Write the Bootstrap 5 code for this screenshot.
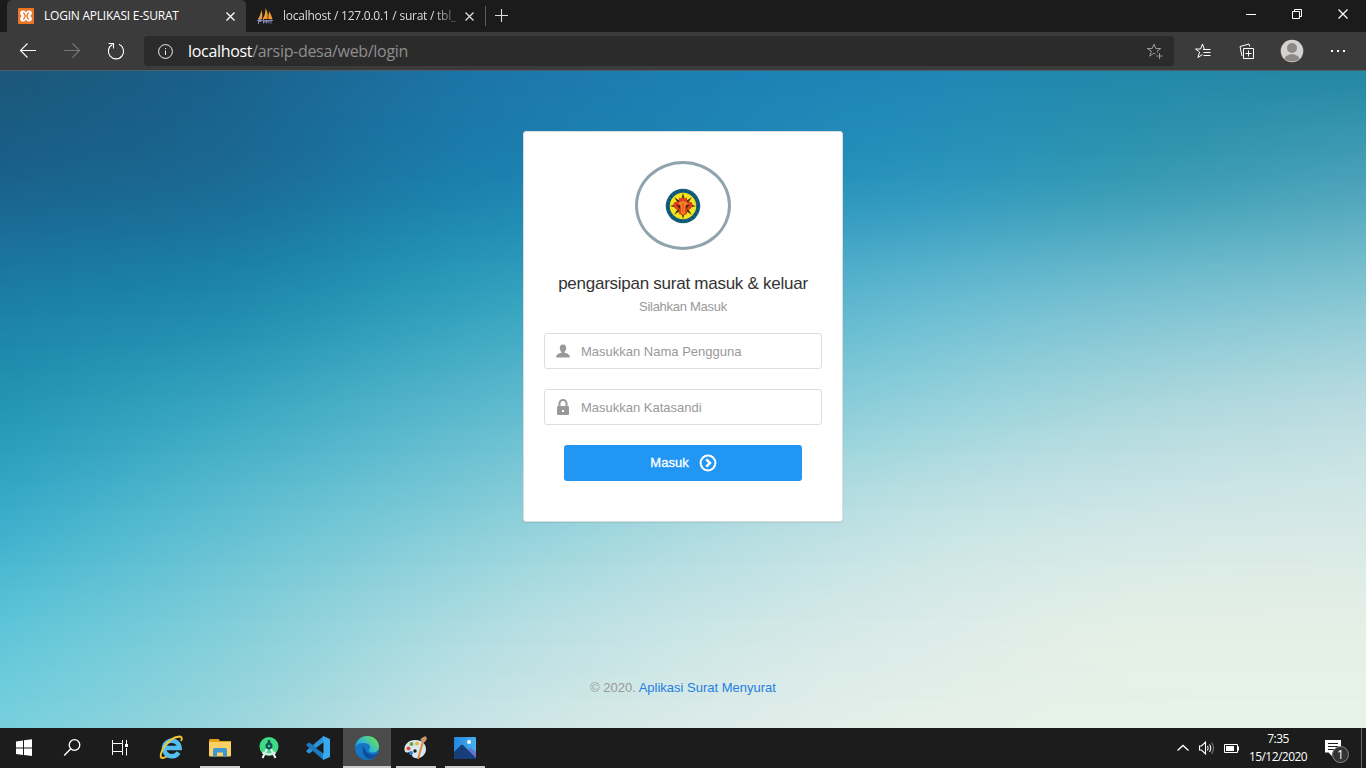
<!DOCTYPE html>
<html lang="id">
<head>
<meta charset="utf-8">
<meta name="viewport" content="width=device-width, initial-scale=1">
<title>LOGIN APLIKASI E-SURAT</title>
<link href="https://cdn.jsdelivr.net/npm/bootstrap@5.3.0/dist/css/bootstrap.min.css" rel="stylesheet">
<style>
body{font-family:"Liberation Sans",Arial,sans-serif;font-size:13px;line-height:20px;height:768px;overflow:hidden;color:#333}
svg{display:block;flex:none}
.ui-font{font-family:"Open Sans","Noto Sans",sans-serif}
/* browser window */
.tab-strip{height:32px;background:#1b1b1b;color:#fff;font-size:12px}
.tab-item{height:32px}
.tab-item.current{width:239px;margin-left:7px;padding-left:11px;background:#3b3b3b;border-radius:5px 5px 0 0}
.tab-item.other{width:239px;padding-left:11px}
.tab-text{white-space:nowrap;line-height:16px;width:181px;margin-left:10px;letter-spacing:-.23px}
.tab-item.other .tab-text{color:#ddd;letter-spacing:-.24px;-webkit-mask-image:linear-gradient(90deg,#000 150px,transparent 180px);mask-image:linear-gradient(90deg,#000 150px,transparent 180px)}
.tool-bar{height:39px;background:#3b3b3b;border-bottom:1px solid #4f6069}
.address{width:1030px;height:30px;background:#2b2b2b;border-radius:4px;font-size:16px;color:#8e8e8e}
.address-text{margin-left:15px;white-space:nowrap;letter-spacing:-.31px}
/* page */
.page-area{height:657px;isolation:isolate}
.sky{position:absolute;inset:0;z-index:-1}
.sky div{position:absolute;inset:0}
.login-card{width:320px;height:391px;margin-top:60px;border:1px solid #ddd;border-radius:3px;box-shadow:0 1px 1px rgba(0,0,0,.08);padding:29px 20px 0}
.emblem{width:96px;height:89px;border:3px solid #90a4ae;border-radius:50%}
.form-title{font-size:17px;line-height:24px;margin-top:22px;color:#333;white-space:nowrap;letter-spacing:-.26px}
.form-note{letter-spacing:-.27px;margin-top:1px}
.soft{color:#999}
.field{height:36px;border:1px solid #ddd;border-radius:3px;padding-left:11px}
.field input{border:0;outline:0;padding:2px 0 0;width:220px;margin-left:11px;color:#333;background:none}
.field input::placeholder{color:#999;opacity:1}
.enter{width:238px;height:36px;background:#2196f3;border:0;border-radius:3px;color:#fff;font-size:13px;font-weight:500;-webkit-text-stroke:.3px #fff;padding:0 0 0 1px}
.page-foot{margin-top:156px}
.page-foot a{color:#1e7fe0;text-decoration:none}
/* taskbar */
.task-bar{height:40px;background:#1c1c1c;color:#fff}
.app{width:40px;height:40px;border-bottom:2px solid transparent}
.app.running{border-color:#ccc}
.app.focused{width:48px;background:#4b4b4b}
.clock{font-size:12px;line-height:18px;width:60px;text-align:center;white-space:nowrap;letter-spacing:-.55px}
.note-count{position:absolute;left:24px;top:18px;width:17px;height:17px;border:1px solid #888;border-radius:50%;background:#333;font-size:12px;line-height:15px;text-align:center}
</style>
</head>
<body>
<header class="ui-font">
 <div class="tab-strip d-flex">
  <div class="tab-item current d-flex align-items-center">
   <svg width="16" height="16" viewBox="0 0 16 16"><rect width="16" height="16" rx="1" fill="#ec7424"/><path d="M4.500 2.500h1.800L8 4.200l1.700-1.700h1.800c3 0 3 4 .8 5.500 2.200 1.500 2.200 5.500-.8 5.500H9.700L8 11.800l-1.700 1.700H4.500c-3 0-3-4-.8-5.500-2.200-1.500-2.200-5.500.8-5.500z" fill="#fff"/><path d="M5 5.200h1L7.300 8 6 10.800H5M11 5.200h-1L8.700 8l1.300 2.800h1" fill="none" stroke="#ec7424" stroke-width="1.300"/></svg>
   <span class="tab-text">LOGIN APLIKASI E-SURAT</span>
   <svg width="10" height="10" viewBox="0 0 10 10"><path d="M1.500 1.500l8 8M9.500 1.500l-8 8" stroke="#fff" stroke-width="1.300"/></svg>
  </div>
  <div class="tab-item other d-flex align-items-center">
   <svg width="16" height="16" viewBox="0 0 16 16"><path d="M1 11C3 8 4 5 4.500 2 5.500 5 5.500 8 5 11zM5.500 11c2.500-3 3-7 3-11 2.500 4 2.500 8 2 11zM11 11c1-2 1-6 .8-8 2 3 3 5 3.700 8z" fill="#f79421"/><path d="M3 10l1.500-5M8 10l1-6M12 10V6" stroke="#c9b27a" stroke-width=".8"/><path d="M1.500 16v-4.500H4v2H1.500M6.500 11v4.500M6.500 13H8v2M9.500 15.500v-3.500l1.200 2 1.200-2v3.500M14 11v4.500M0 12.500h16" stroke="#8587ae" stroke-width="1" fill="none"/></svg>
   <span class="tab-text">localhost / 127.0.0.1 / surat / tbl_</span>
   <svg width="10" height="10" viewBox="0 0 10 10"><path d="M1.500 1.500l8 8M9.500 1.500l-8 8" stroke="#ddd" stroke-width="1.300"/></svg>
  </div>
  <svg width="24" height="32" viewBox="0 0 24 32"><path d="M.5 6v20" stroke="#5c5c5c"/><path d="M10 15.500h13M16.500 9v13" stroke="#ddd" stroke-width="1.100"/></svg>
  <svg class="ms-auto" width="120" height="32" viewBox="0 0 120 32" fill="none" stroke="#fff"><path d="M0 14.500h10"/><path d="M46.500 11.500h7v7h-7zM48.500 11.500v-2h7v7h-2"/><path d="M92.500 9.500l9 9M101.500 9.500l-9 9" stroke-width="1.200"/></svg>
 </div>
 <div class="tool-bar d-flex align-items-center">
  <svg width="144" height="38" viewBox="0 0 144 38" fill="none" stroke="#fff" stroke-width="1.100"><path d="M36 18.500H20.500M27.500 11.500l-7 7 7 7"/><path d="M64 18.500h15.500M72.500 11.500l7 7-7 7" stroke="#777"/><path d="M112.500 12.500a7.600 7.600 0 1 0 6.500-.2M108.500 11.500h5v5"/></svg>
  <div class="address d-flex align-items-center">
   <svg style="margin-left:14px" width="15" height="15" viewBox="0 0 15 15" fill="none" stroke="#eee"><circle cx="7.500" cy="7.500" r="6.900"/><path d="M7.500 6.500V11M7.500 4v1.200"/></svg>
   <span class="address-text"><span class="text-white">localhost</span>/arsip-desa/web/login</span>
   <svg class="ms-auto" style="margin-right:10px" width="18" height="18" viewBox="0 0 18 18" fill="none" stroke="#999"><path d="M9.500 12.200L8 11l-4.300 3.200L5.300 9 1.200 6.500h5L8 2.200l1.800 4.300h5L11.200 9l.4 1.500M13.500 11v6M10.500 14h6"/></svg>
  </div>
  <svg class="ms-auto" width="172" height="38" viewBox="0 0 172 38" fill="none" stroke="#fff"><path d="M8.500 22.500l-4.600 3 1.700-5.500L1.500 17h5l2-5 1.700 5M9 17.500h7.500M9.500 20.500h7M9.500 23.500h7"/><path d="M49.500 16.500h10v10h-10zM54.500 18.500v6M51.500 21.500h6"/><path d="M48 24l-2-9.500 9-2.500.7 2.500"/><g stroke="none"><circle cx="98" cy="19" r="11.300" fill="#d5d3d1"/><circle cx="98" cy="16" r="5" fill="#8b8885"/><path d="M90.500 26.800C92 20.800 104 20.800 105.500 26.800 102 30.500 94 30.500 90.500 26.800z" fill="#8b8885"/><path d="M137 18h2v2h-2zM143 18h2v2h-2zM149 18h2v2h-2z" fill="#fff"/></g></svg>
 </div>
</header>

<main class="page-area position-relative d-flex flex-column align-items-center overflow-hidden">
 <div class="sky" id="sky"></div>
 <form class="login-card bg-white text-center" onsubmit="return false">
  <div class="emblem mx-auto d-flex align-items-center justify-content-center">
   <svg width="36" height="36" viewBox="-18 -18 36 36"><circle r="17.300" fill="#17617f"/><circle r="15" fill="none" stroke="#0b4868" stroke-width="1.500" stroke-dasharray="2 2"/><circle r="13.200" fill="#f5e51c"/><g fill="#493712"><path d="M-2-6L0-13l2 7zM-2 6L0 13 2 6zM-6-2L-13 0l7 2zM6-2L13 0 6 2z"/><path transform="rotate(45)" d="M-1.700-5L0-12.500l1.700 7.500zM-1.700 5L0 12.500 1.700 5zM-5-1.700L-12.500 0l7.500 1.700zM5-1.700L12.500 0 5 1.700z"/></g><path d="M-4-8.500l2.500 1L0-9l1.500 1.500 2.500-1V-4h4.500L10-1 7 3.500H4V8L0 9.500-4 8V3.500h-3L-10-1l1.500-3H-4z" fill="#df3f20"/><path d="M-5-3L0-5l5 2-3 3v7L0 9l-2-2V0z" fill="#f28525"/><path d="M-7-1.500l4 1V3zM7-1.500l-4 1V3z" fill="#56200d"/><path d="M0-3v9" stroke="#e04422"/></svg>
  </div>
  <div class="form-title">pengarsipan surat masuk &amp; keluar</div>
  <div class="soft form-note">Silahkan Masuk</div>
  <label class="field d-flex align-items-center" style="margin-top:16px">
   <svg width="14" height="14" viewBox="0 0 14 14" fill="#999"><path d="M7 .5c2.200 0 3.200 1.500 3.200 3.500 0 1.700-.8 3.300-1.700 4v.8c2.700.3 5.300 1.800 5.500 4.700H0c.2-2.900 2.800-4.400 5.500-4.700V8c-.9-.7-1.700-2.300-1.700-4C3.800 2 4.800.5 7 .5z"/></svg>
   <input type="text" placeholder="Masukkan Nama Pengguna">
  </label>
  <label class="field d-flex align-items-center" style="margin-top:20px">
   <svg width="14" height="16" viewBox="0 0 14 16"><path d="M3.500 8V4.500a3.500 3.500 0 0 1 7 0V8" fill="none" stroke="#999" stroke-width="2"/><rect x="1" y="7" width="12" height="9" rx="1" fill="#999"/><path d="M6 11h2v2H6z" fill="#fff"/></svg>
   <input type="password" placeholder="Masukkan Katasandi">
  </label>
  <button class="enter btn mx-auto d-flex align-items-center justify-content-center" style="margin-top:20px"><span>Masuk</span>
   <svg style="margin-left:10px" width="18" height="18" viewBox="0 0 18 18" fill="none" stroke="#fff" stroke-width="2"><circle cx="9" cy="9" r="7.400"/><path d="M7.300 5.300L11 9l-3.700 3.700" stroke-width="2.500"/></svg>
  </button>
 </form>
 <div class="page-foot soft">© 2020. <a href="#">Aplikasi Surat Menyurat</a></div>
</main>

<footer class="task-bar d-flex ui-font">
 <svg width="151" height="40" viewBox="0 0 151 40" fill="none" stroke="#fff"><path d="M16 13.500l7-1v7h-7zM24 12.300l8-1v8.200h-8zM16 20.500h7V27l-7-1zM24 20.500h8V28l-8-1z" fill="#fff" stroke="none"/><circle cx="74.500" cy="17" r="5.300" stroke-width="1.300"/><path d="M70.800 20.800l-6.600 6.600" stroke-width="1.400"/><path d="M112.500 12v3.500h10V12M112.500 27v-3.500h10V27M112.500 15.500v8M122.500 15.500v8M126.500 12v4M126.500 20v7.500"/><path d="M125 16h3v3h-3z" fill="#fff" stroke="none"/></svg>
 <div class="app d-flex justify-content-center"><svg width="26" height="40" viewBox="0 0 26 40"><path d="M20.500 24.500a7.800 7.800 0 1 1 1.100-4.500H7" fill="none" stroke="#53bff0" stroke-width="4.500"/><path d="M4 30C-1 28 9 9 22 8.500c2.500.5 2 3 1 4.500M4 30c1.500.3 3-.5 4.500-1.500" fill="none" stroke="#f4c631" stroke-width="1.900"/></svg></div>
 <div style="width:9px"></div>
 <div class="app running d-flex justify-content-center"><svg width="22" height="40" viewBox="0 0 22 40"><path d="M0 12.500q0-1.500 1.500-1.500h8l1.500 2h11v14.500H0z" fill="#e4a317"/><path d="M0 14h22v13.500q0 1-1 1H1q-1 0-1-1z" fill="#fad165"/><path d="M4 28.500V22q0-2 2-2h10q2 0 2 2v6.500h-4V24.500H8v4z" fill="#3e96d3"/></svg></div>
 <div style="width:9px"></div>
 <div class="app d-flex justify-content-center"><svg width="20" height="40" viewBox="0 0 20 40"><circle cx="10" cy="18.500" r="9.500" fill="#3ddc84"/><path d="M10 12v3" stroke="#174e55" stroke-width="2.500"/><circle cx="10" cy="18" r="3.500" fill="#174e55"/><circle cx="10" cy="18" r="1.200" fill="#3ddc84"/><path d="M8 21L3.500 30M12 21l4.500 9" stroke="#f1f4f5" stroke-width="2"/><path d="M3.500 24.500q6.500 3.500 13 0" fill="none" stroke="#dae8e8" stroke-width="2"/></svg></div>
 <div style="width:9px"></div>
 <div class="app d-flex justify-content-center"><svg width="24" height="40" viewBox="0 0 24 40"><path d="M17.500 14.500L3.500 25.500 .5 24v-1.500L17.500 8z" fill="#2a93d8"/><path d="M17.500 25.500L3.500 14.500 .5 16v1.500l17 14.500z" fill="#1c79bd"/><path d="M17 8l7 3v18l-7 3z" fill="#39a9ef"/><path d="M17.500 14.500v11L10 20z" fill="#1c1c1c"/></svg></div>
 <div style="width:5px"></div>
 <div class="app focused running d-flex justify-content-center"><svg width="24" height="40" viewBox="0 0 24 40"><defs><linearGradient id="eg" x1="0" y1="1" x2="1" y2=".3"><stop offset="0" stop-color="#1677cc"/><stop offset=".5" stop-color="#2fb7d3"/><stop offset="1" stop-color="#6be056"/></linearGradient></defs><circle cx="12" cy="20" r="12" fill="#1475c5"/><path d="M0 19C1 12 6 8 12 8c7 0 12 5 12 10.500 0 4-3 6-6.500 6-3 0-4.500-1.200-3.500-2.500 3-4-.5-7-5-7-4 0-7 1.500-9 4z" fill="url(#eg)"/><path d="M9 18c-3 4-.5 11.500 5.500 13 4-.7 7-3 8.500-6-5 3.500-13 1.500-14-7z" fill="#0e4d9c"/></svg></div>
 <div style="width:5px"></div>
 <div class="app running d-flex justify-content-center"><svg width="26" height="40" viewBox="0 0 26 40"><path d="M12.500 12C5 12 1 17 1.500 22c.5 3 3 3 4.500 2 3 0 2 5 6 6 6 1 11-3 11-9 0-5-4-9-10.500-9z" fill="#d8e8f3"/><circle cx="5.500" cy="20.500" r="2" fill="#e04a35"/><circle cx="8.500" cy="16" r="2" fill="#66a83a"/><circle cx="14" cy="15.500" r="2" fill="#edb830"/><circle cx="8" cy="25" r="2" fill="#3c7ed0"/><circle cx="12" cy="23" r="1.700" fill="#1c1c1c"/><path d="M14 31l4.500-16 2 .5L16 31z" fill="#e08b38"/><path d="M19 15.500l-1.500-4c1-2 3-2 4.500-3.500l2 2c-.5 1-.5 3-3 4.500l-.5 1.500z" fill="#c8976a"/></svg></div>
 <div style="width:9px"></div>
 <div class="app running d-flex justify-content-center"><svg width="22" height="40" viewBox="0 0 22 40"><defs><linearGradient id="pg" x1="0" x2="1"><stop offset="0" stop-color="#2487df"/><stop offset="1" stop-color="#49b0f0"/></linearGradient></defs><rect y="9" width="22" height="22" rx="1" fill="url(#pg)"/><path d="M11 25l5-5q.7-.5 1.400 0l4.600 4v7H12z" fill="#6675cc"/><path d="M0 24l7-7q1-1 2 0l13 13v1H0z" fill="#173e7b"/><circle cx="15" cy="14" r="2" fill="#fff"/></svg></div>
 <svg class="ms-auto" width="64" height="40" viewBox="0 0 64 40" fill="none" stroke="#fff"><path d="M.5 22.500l5.500-5 5.500 5" stroke-width="1.300"/><path d="M22.500 18h2l4-4v12l-4-4h-2zM30.500 18q1.500 2 0 4.500M32.500 16.500q2.500 3.500 0 7.500" stroke-width="1.100"/><path d="M34.700 14.500q3.500 5.500 0 11.500" stroke="#888"/><path d="M47.500 16.500h13v8h-13zM61.500 18.500v4"/><path d="M49 18h8v5h-8z" fill="#fff" stroke="none"/></svg>
 <div class="clock" style="margin-left:7px;margin-top:2px"><div>7:35</div><div>15/12/2020</div></div>
 <div class="position-relative" style="width:53px;padding-left:16px;padding-top:11px"><svg width="18" height="19" viewBox="0 0 18 19"><path d="M1 1h16v12.500H8V17l-3.500-3.500H1z" fill="#fff"/><path d="M4 4.500h10M4 7.500h10M4 10.500h6" stroke="#1c1c1c"/></svg><span class="note-count">1</span></div>
 <div style="width:5px;border-left:1px solid #666"></div>
</footer>
<script src="https://cdn.jsdelivr.net/npm/bootstrap@5.3.0/dist/js/bootstrap.bundle.min.js"></script>
<script>
// Colour mesh of the page background, smoothed to a finer grid;
// each row then fades into the one below it.
const mesh = [
 ['#1b5778','#1a618c','#1d73a5','#1d7eb3','#1e86b5','#2387a9','#2488a4'],
 ['#1a628c','#1b6b95','#1c7fac','#228ab5','#2c95bd','#389bb4','#4ba2b9'],
 ['#1c7ca3','#1e86aa','#2d9cba','#45a9c5','#60b7cf','#74bed0','#82c4d1'],
 ['#2294b2','#37a4bf','#56b5cb','#72c2d2','#90cfdb','#a8d6dc','#b8dbe0'],
 ['#38abc9','#5cbcd0','#7fcad7','#a3d7de','#bee1e3','#cde5e6','#d3e7e6'],
 ['#5bc3d7','#80cdd9','#a9dae0','#c6e4e5','#d8eae8','#e2efe6','#e3efe6'],
 ['#78d0dd','#9bd6dd','#c6e3e5','#dbebe8','#e5f0e9','#e8f2e8','#e8f3e8']
].map(r => r.map(h => [1, 3, 5].map(k => parseInt(h.substr(k, 2), 16))));
// Catmull-Rom subdivision of a list of number vectors
function refine(list, steps) {
  const out = [], last = list.length - 1;
  for (let i = 0; i < last; i++) {
    const b = list[i], c = list[i + 1];
    const a = list[i - 1] || b.map((v, k) => 2 * v - c[k]);
    const d = list[i + 2] || c.map((v, k) => 2 * v - b[k]);
    for (let s = 0; s < steps; s++) {
      const t = s / steps;
      out.push(b.map((v, k) => .5 * (2 * v + (c[k] - a[k]) * t + (2 * a[k] - 5 * v + 4 * c[k] - d[k]) * t * t + (3 * v - a[k] - 3 * c[k] + d[k]) * t * t * t)));
    }
  }
  out.push(list[last]);
  return out;
}
const rows = refine(mesh.map(r => refine(r, 3).flat()), 4);
const sky = document.getElementById('sky'), n = rows.length - 1;
for (let i = n; i >= 0; i--) {
  const d = document.createElement('div'), stops = [];
  for (let k = 0; k < rows[i].length; k += 3) stops.push('rgb(' + rows[i].slice(k, k + 3).map(Math.round).join(',') + ')');
  d.style.background = 'linear-gradient(90deg,' + stops.join(',') + ')';
  if (i < n) {
    const m = `linear-gradient(180deg,#000 ${i / n * 100}%,transparent ${(i + 1) / n * 100}%)`;
    d.style.webkitMaskImage = m; d.style.maskImage = m;
  }
  sky.append(d);
}
</script>
</body>
</html>
